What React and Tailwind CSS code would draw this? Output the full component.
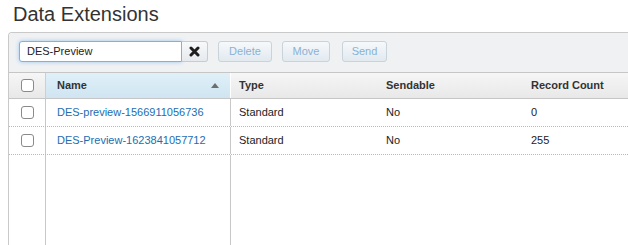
import React from "react";

function Checkbox() {
  return <span className="block w-[13px] h-[13px] rounded-[3px] border border-[#8a8a8a] bg-white" />;
}

const rows = [
  { name: "DES-preview-1566911056736", type: "Standard", sendable: "No", count: "0" },
  { name: "DES-Preview-1623841057712", type: "Standard", sendable: "No", count: "255" },
];

export default function App() {
  return (
    <div
      className="w-[628px] h-[245px] overflow-hidden bg-white text-[#222]"
      style={{ fontFamily: '"Liberation Sans", Arial, Helvetica, sans-serif' }}
    >
      <h1 className="pl-[13px] pt-[2px] h-[32px] text-[20px] leading-[24px] font-normal text-[#333]">
        Data Extensions
      </h1>
      <div className="ml-[8px] border-l border-t border-[#c9c9c9] rounded-tl-[4px] overflow-hidden">
        {/* toolbar */}
        <div className="h-[40px] bg-[#f0f1f3] border-b border-[#c6c6c6] flex items-start pt-[8px] pl-[10px]">
          <div className="flex">
            <div className="w-[163px] h-[21px] border border-[#7eb2e6] rounded-l-[3px] bg-white shadow-[0_0_4px_#9cc8f0] flex items-center pl-[7px] text-[11px]">
              DES-Preview
            </div>
            <div className="w-[26px] h-[21px] border border-l-0 border-[#c4cdd5] rounded-r-[3px] bg-gradient-to-b from-[#f7f9fa] to-[#e6eaee] flex items-center justify-center">
              <svg width="11" height="11" viewBox="0 0 11 11">
                <path d="M2 2 L9 9 M9 2 L2 9" stroke="#1e1e1e" strokeWidth="3" strokeLinecap="round" />
              </svg>
            </div>
          </div>
          <div className="ml-[10px] w-[54px] h-[21px] border border-[#c8d3dc] rounded-[3px] bg-gradient-to-b from-[#f6f9fb] to-[#e2e9ef] flex items-center justify-center text-[11px] text-[#8ab2d4]">
            Delete
          </div>
          <div className="ml-[10px] w-[48px] h-[21px] border border-[#c8d3dc] rounded-[3px] bg-gradient-to-b from-[#f6f9fb] to-[#e2e9ef] flex items-center justify-center text-[11px] text-[#8ab2d4]">
            Move
          </div>
          <div className="ml-[12px] w-[45px] h-[21px] border border-[#c8d3dc] rounded-[3px] bg-gradient-to-b from-[#f6f9fb] to-[#e2e9ef] flex items-center justify-center text-[11px] text-[#8ab2d4]">
            Send
          </div>
        </div>
        {/* header */}
        <div className="grid grid-cols-[37px_185px_147px_145px_1fr] h-[26px] border-b border-[#c6c6c6] bg-gradient-to-b from-[#f6f6f6] to-[#e8e8e8] text-[11px] font-bold text-[#333]">
          <div className="border-r border-[#cfcfcf] flex items-center justify-center pl-[1px]">
            <Checkbox />
          </div>
          <div className="border-r border-white bg-gradient-to-b from-[#e0f0f9] to-[#cfe5f1] flex items-center justify-between pl-[11px] pr-[11px]">
            <span>Name</span>
            <svg width="8" height="5" viewBox="0 0 8 5">
              <path d="M0 5 L4 0 L8 5 Z" fill="#6e6e6e" />
            </svg>
          </div>
          <div className="flex items-center pl-[8px]">Type</div>
          <div className="flex items-center pl-[8px]">Sendable</div>
          <div className="flex items-center pl-[8px]">Record Count</div>
        </div>
        {/* body */}
        {rows.map((r) => (
          <div
            key={r.name}
            className="grid grid-cols-[37px_185px_147px_145px_1fr] h-[28px] border-b border-dotted border-[#b8b8b8] text-[11px]"
          >
            <div className="border-r border-[#c8c8c8] flex items-center justify-center pl-[1px]">
              <Checkbox />
            </div>
            <div className="border-r border-[#c8c8c8] flex items-center pl-[11px] text-[#1c6db3]">{r.name}</div>
            <div className="flex items-center pl-[8px]">{r.type}</div>
            <div className="flex items-center pl-[8px]">{r.sendable}</div>
            <div className="flex items-center pl-[8px]">{r.count}</div>
          </div>
        ))}
        <div className="grid grid-cols-[37px_185px_147px_145px_1fr] h-[110px]">
          <div className="border-r border-[#c8c8c8]" />
          <div className="border-r border-[#c8c8c8]" />
          <div />
          <div />
          <div />
        </div>
      </div>
    </div>
  );
}
